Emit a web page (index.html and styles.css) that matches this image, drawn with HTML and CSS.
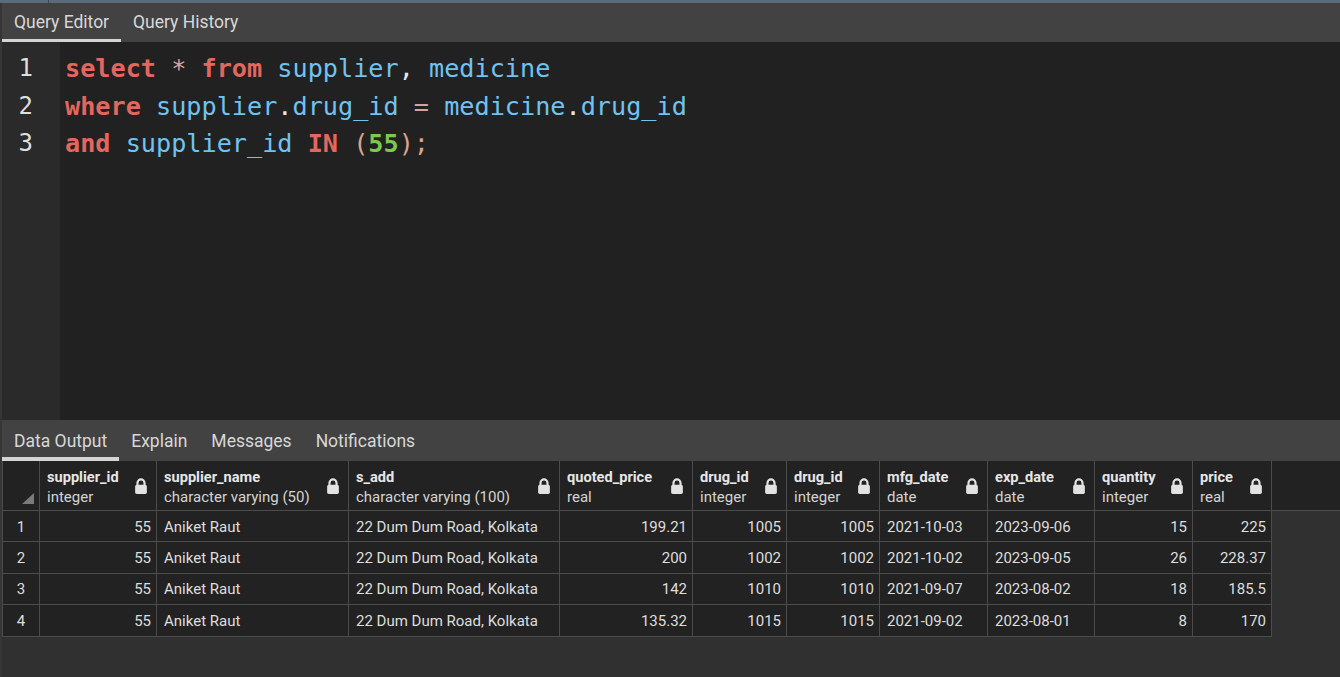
FILE: index.html
```html
<!DOCTYPE html>
<html>
<head>
<meta charset="utf-8">
<link rel="stylesheet" href="styles.css">
</head>
<body>
<div class="topbar"><span class="tick"></span></div>
<div class="panel">
  <div class="tabs top">
    <div class="tab active">Query Editor</div>
    <div class="tab">Query History</div>
  </div>
  <div class="editor">
    <div class="gutter">
      <div class="ln">1</div>
      <div class="ln">2</div>
      <div class="ln">3</div>
    </div>
    <div class="code">
      <div class="line"><span class="kw">select</span> <span class="op">*</span> <span class="kw">from</span> <span class="var">supplier</span><span class="pn">,</span> <span class="var">medicine</span></div>
      <div class="line"><span class="kw">where</span> <span class="var">supplier</span><span class="pn">.</span><span class="var">drug_id</span> <span class="op">=</span> <span class="var">medicine</span><span class="pn">.</span><span class="var">drug_id</span></div>
      <div class="line"><span class="kw">and</span> <span class="var">supplier_id</span> <span class="kw">IN</span> <span class="br">(</span><span class="num">55</span><span class="br">);</span></div>
    </div>
  </div>
  <div class="tabs bottom">
    <div class="tab active">Data Output</div>
    <div class="tab">Explain</div>
    <div class="tab">Messages</div>
    <div class="tab">Notifications</div>
  </div>
  <div class="grid">
    <div class="head">
      <div class="hc c0"><span class="corner"></span></div>
      <div class="hc c1"><div class="ht"><b>supplier_id</b><span>integer</span></div><svg class="lock" viewBox="0 0 13 15"><path d="M3.2 7V4.6a3.3 3.3 0 0 1 6.6 0V7" fill="none" stroke="currentColor" stroke-width="2"/><rect x="1" y="6.3" width="11" height="8.7" rx="1.6" fill="currentColor"/></svg></div>
      <div class="hc c2"><div class="ht"><b>supplier_name</b><span>character varying (50)</span></div><svg class="lock" viewBox="0 0 13 15"><path d="M3.2 7V4.6a3.3 3.3 0 0 1 6.6 0V7" fill="none" stroke="currentColor" stroke-width="2"/><rect x="1" y="6.3" width="11" height="8.7" rx="1.6" fill="currentColor"/></svg></div>
      <div class="hc c3"><div class="ht"><b>s_add</b><span>character varying (100)</span></div><svg class="lock" viewBox="0 0 13 15"><path d="M3.2 7V4.6a3.3 3.3 0 0 1 6.6 0V7" fill="none" stroke="currentColor" stroke-width="2"/><rect x="1" y="6.3" width="11" height="8.7" rx="1.6" fill="currentColor"/></svg></div>
      <div class="hc c4"><div class="ht"><b>quoted_price</b><span>real</span></div><svg class="lock" viewBox="0 0 13 15"><path d="M3.2 7V4.6a3.3 3.3 0 0 1 6.6 0V7" fill="none" stroke="currentColor" stroke-width="2"/><rect x="1" y="6.3" width="11" height="8.7" rx="1.6" fill="currentColor"/></svg></div>
      <div class="hc c5"><div class="ht"><b>drug_id</b><span>integer</span></div><svg class="lock" viewBox="0 0 13 15"><path d="M3.2 7V4.6a3.3 3.3 0 0 1 6.6 0V7" fill="none" stroke="currentColor" stroke-width="2"/><rect x="1" y="6.3" width="11" height="8.7" rx="1.6" fill="currentColor"/></svg></div>
      <div class="hc c6"><div class="ht"><b>drug_id</b><span>integer</span></div><svg class="lock" viewBox="0 0 13 15"><path d="M3.2 7V4.6a3.3 3.3 0 0 1 6.6 0V7" fill="none" stroke="currentColor" stroke-width="2"/><rect x="1" y="6.3" width="11" height="8.7" rx="1.6" fill="currentColor"/></svg></div>
      <div class="hc c7"><div class="ht"><b>mfg_date</b><span>date</span></div><svg class="lock" viewBox="0 0 13 15"><path d="M3.2 7V4.6a3.3 3.3 0 0 1 6.6 0V7" fill="none" stroke="currentColor" stroke-width="2"/><rect x="1" y="6.3" width="11" height="8.7" rx="1.6" fill="currentColor"/></svg></div>
      <div class="hc c8"><div class="ht"><b>exp_date</b><span>date</span></div><svg class="lock" viewBox="0 0 13 15"><path d="M3.2 7V4.6a3.3 3.3 0 0 1 6.6 0V7" fill="none" stroke="currentColor" stroke-width="2"/><rect x="1" y="6.3" width="11" height="8.7" rx="1.6" fill="currentColor"/></svg></div>
      <div class="hc c9"><div class="ht"><b>quantity</b><span>integer</span></div><svg class="lock" viewBox="0 0 13 15"><path d="M3.2 7V4.6a3.3 3.3 0 0 1 6.6 0V7" fill="none" stroke="currentColor" stroke-width="2"/><rect x="1" y="6.3" width="11" height="8.7" rx="1.6" fill="currentColor"/></svg></div>
      <div class="hc c10"><div class="ht"><b>price</b><span>real</span></div><svg class="lock" viewBox="0 0 13 15"><path d="M3.2 7V4.6a3.3 3.3 0 0 1 6.6 0V7" fill="none" stroke="currentColor" stroke-width="2"/><rect x="1" y="6.3" width="11" height="8.7" rx="1.6" fill="currentColor"/></svg></div>
    </div>
    <div class="rows">
      <div class="row">
        <div class="cell c0 rn">1</div><div class="cell c1 r">55</div><div class="cell c2">Aniket Raut</div><div class="cell c3">22 Dum Dum Road, Kolkata</div><div class="cell c4 r">199.21</div><div class="cell c5 r">1005</div><div class="cell c6 r">1005</div><div class="cell c7">2021-10-03</div><div class="cell c8">2023-09-06</div><div class="cell c9 r">15</div><div class="cell c10 r">225</div>
      </div>
      <div class="row">
        <div class="cell c0 rn">2</div><div class="cell c1 r">55</div><div class="cell c2">Aniket Raut</div><div class="cell c3">22 Dum Dum Road, Kolkata</div><div class="cell c4 r">200</div><div class="cell c5 r">1002</div><div class="cell c6 r">1002</div><div class="cell c7">2021-10-02</div><div class="cell c8">2023-09-05</div><div class="cell c9 r">26</div><div class="cell c10 r">228.37</div>
      </div>
      <div class="row">
        <div class="cell c0 rn">3</div><div class="cell c1 r">55</div><div class="cell c2">Aniket Raut</div><div class="cell c3">22 Dum Dum Road, Kolkata</div><div class="cell c4 r">142</div><div class="cell c5 r">1010</div><div class="cell c6 r">1010</div><div class="cell c7">2021-09-07</div><div class="cell c8">2023-08-02</div><div class="cell c9 r">18</div><div class="cell c10 r">185.5</div>
      </div>
      <div class="row">
        <div class="cell c0 rn">4</div><div class="cell c1 r">55</div><div class="cell c2">Aniket Raut</div><div class="cell c3">22 Dum Dum Road, Kolkata</div><div class="cell c4 r">135.32</div><div class="cell c5 r">1015</div><div class="cell c6 r">1015</div><div class="cell c7">2021-09-02</div><div class="cell c8">2023-08-01</div><div class="cell c9 r">8</div><div class="cell c10 r">170</div>
      </div>
    </div>
  </div>
</div>
</body>
</html>
```

FILE: styles.css
```css
* { box-sizing: border-box; }
html, body {
  margin: 0;
  padding: 0;
  width: 1340px;
  height: 677px;
  overflow: hidden;
  background: #303030;
  font-family: Roboto, "Liberation Sans", sans-serif;
  color: #dcdcdc;
}
.topbar {
  height: 3px;
  background: #5b6b7a;
  position: relative;
}
.tick {
  position: absolute;
  left: 48px;
  top: 0;
  width: 1px;
  height: 3px;
  background: #3e4a55;
}
.panel {
  height: 674px;
  display: flex;
  flex-direction: column;
  border-left: 2px solid #363636;
}
.tabs {
  display: flex;
  background: #424242;
  flex: none;
}
.tabs.top { height: 39px; }
.tabs.bottom { height: 41px; }
.tab {
  display: flex;
  align-items: center;
  padding: 1px 12px 0;
  font-size: 17.5px;
  color: #d8d8d8;
  border-bottom: 3px solid transparent;
  white-space: nowrap;
}
.tab.active { border-bottom-color: #d4d4d4; }
.tabs.bottom .tab { border-bottom-width: 4px; padding-top: 4px; }

.editor {
  height: 378px;
  flex: none;
  display: flex;
  background: #212121;
}
.gutter {
  width: 58px;
  flex: none;
  background: #2a2a2a;
  padding-top: 8px;
  font-family: "DejaVu Sans Mono", "Liberation Mono", monospace;
  font-size: 24px;
  line-height: 37.5px;
  color: #dedede;
  text-align: right;
  padding-right: 27px;
}
.code {
  padding: 8px 0 0 5px;
  font-family: "DejaVu Sans Mono", "Liberation Mono", monospace;
  font-size: 25.2px;
  line-height: 37.5px;
  color: #ffffff;
}
.line { white-space: pre; height: 37.5px; }
.kw { color: #e2675e; font-weight: bold; }
.var { color: #70c3f0; }
.num { color: #7cc94f; font-weight: bold; }
.op { color: #d9a2a2; }
.br { color: #dba48e; }
.pn { color: #e8e8e8; }

.grid {
  flex: 1;
  background: #303030;
  font-size: 15px;
}
.head {
  display: flex;
  height: 50px;
  background: #222222;
  border-bottom: 1px solid #4c4c4c;
}
.rows {
  display: flex;
  flex-direction: column;
  align-items: flex-start;
}
.row {
  display: flex;
  height: 31.4px;
  background: #222222;
  border-left: 1px solid #4c4c4c;
}
.head .hc.c0 { border-left: 1px solid #4c4c4c; }
.hc, .cell {
  flex: none;
  border-right: 1px solid #4c4c4c;
}
.hc {
  display: flex;
  align-items: center;
  padding: 2px 8px 0 7px;
}
.head .hc.c0 { width: 38px; }
.row .cell.c0 { width: 37px; }
.c1 { width: 117px; }
.c2 { width: 192px; }
.c3 { width: 211px; }
.c4 { width: 133px; }
.c5 { width: 94px; }
.c6 { width: 93px; }
.c7 { width: 108px; }
.c8 { width: 107px; }
.c9 { width: 98px; }
.c10 { width: 79px; }
.ht {
  flex: 1;
  display: flex;
  flex-direction: column;
  line-height: 20px;
  min-width: 0;
  white-space: nowrap;
}
.ht b { font-weight: 700; color: #e6e6e6; font-size: 14.6px; }
.ht span { color: #d4d4d4; }
.lock {
  width: 14px;
  height: 16px;
  flex: none;
  color: #e2e2e2;
  margin-top: -2px;
}
.hc.c0 {
  position: relative;
}
.corner {
  position: absolute;
  right: 5px;
  bottom: 6px;
  width: 0;
  height: 0;
  border-left: 12px solid transparent;
  border-bottom: 11px solid #7a7a7a;
}
.cell {
  border-bottom: 1px solid #4c4c4c;
  display: flex;
  align-items: center;
  padding: 1px 7px 0;
  color: #dedede;
  white-space: nowrap;
}
.cell.r { justify-content: flex-end; padding-right: 5px; }
.cell.rn { justify-content: center; padding: 1px 0 0; }
```
